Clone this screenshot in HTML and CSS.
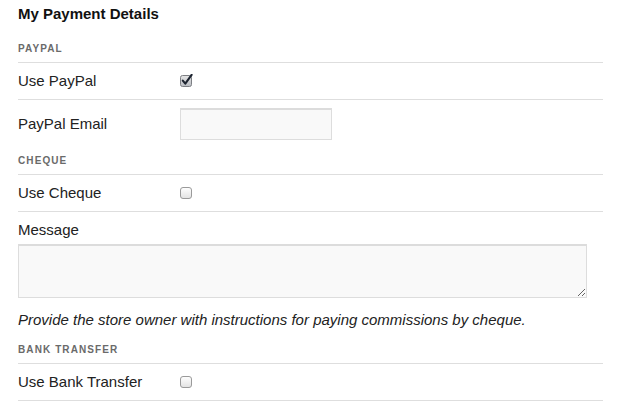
FILE: index.html
```html
<!DOCTYPE html>
<html>
<head>
<meta charset="utf-8">
<link rel="stylesheet" href="styles.css">
</head>
<body>
<div class="page">
  <h2 class="title">My Payment Details</h2>

  <div class="section-head">PayPal</div>
  <div class="row">
    <label class="label">Use PayPal</label>
    <span class="check checked">
      <svg width="13" height="13" viewBox="0 0 13 13">
        <defs>
          <linearGradient id="g1" x1="0" y1="0" x2="0" y2="1">
            <stop offset="0" stop-color="#e6e6e6"/>
            <stop offset="1" stop-color="#b9bcc2"/>
          </linearGradient>
        </defs>
        <rect x="0.5" y="1.5" width="11" height="11" rx="2" fill="url(#g1)" stroke="#7d7f84"/>
        <path d="M2.8 6.6 L5.3 9.6 L11.6 0.8" fill="none" stroke="#1d2430" stroke-width="2.1" stroke-linecap="round" stroke-linejoin="round"/>
      </svg>
    </span>
  </div>
  <div class="row row-field">
    <label class="label">PayPal Email</label>
    <input class="text-input" type="text">
  </div>

  <div class="section-head">Cheque</div>
  <div class="row">
    <label class="label">Use Cheque</label>
    <span class="check">
      <svg width="13" height="13" viewBox="0 0 13 13">
        <defs>
          <linearGradient id="g2" x1="0" y1="0" x2="0" y2="1">
            <stop offset="0" stop-color="#ffffff"/>
            <stop offset="1" stop-color="#e2e2e2"/>
          </linearGradient>
        </defs>
        <rect x="0.5" y="1.5" width="11" height="11" rx="2.5" fill="url(#g2)" stroke="#9a9a9a"/>
      </svg>
    </span>
  </div>
  <div class="block">
    <label class="block-label">Message</label>
    <textarea class="textarea"></textarea>
    <p class="desc">Provide the store owner with instructions for paying commissions by cheque.</p>
  </div>

  <div class="section-head">Bank Transfer</div>
  <div class="row">
    <label class="label">Use Bank Transfer</label>
    <span class="check">
      <svg width="13" height="13" viewBox="0 0 13 13">
        <defs>
          <linearGradient id="g3" x1="0" y1="0" x2="0" y2="1">
            <stop offset="0" stop-color="#ffffff"/>
            <stop offset="1" stop-color="#e2e2e2"/>
          </linearGradient>
        </defs>
        <rect x="0.5" y="1.5" width="11" height="11" rx="2.5" fill="url(#g3)" stroke="#9a9a9a"/>
      </svg>
    </span>
  </div>
</div>
</body>
</html>
```

FILE: styles.css
```css
html, body {
  margin: 0;
  padding: 0;
  background: #ffffff;
}

body {
  font-family: "Liberation Sans", Arial, Helvetica, sans-serif;
  color: #222222;
}

.page {
  width: 585px;
  padding: 0 0 0 18px;
}

.title {
  margin: 0;
  height: 28px;
  line-height: 28px;
  font-size: 15px;
  font-weight: bold;
  color: #111111;
}

.section-head {
  padding: 14px 0 6px;
  line-height: 14px;
  font-size: 10px;
  font-weight: bold;
  letter-spacing: 1.1px;
  text-transform: uppercase;
  color: #6a6a6a;
  border-bottom: 1px solid #dedede;
}

.row {
  display: flex;
  align-items: center;
  height: 36px;
  border-bottom: 1px solid #dedede;
}

.row-field {
  height: auto;
  padding-top: 8px;
  border-bottom: none;
}

.label {
  width: 162px;
  flex: none;
  font-size: 15px;
  line-height: 18px;
  color: #222222;
}

.check {
  display: flex;
  width: 13px;
  height: 13px;
  margin-left: 0;
  margin-top: -1px;
}

.text-input {
  box-sizing: border-box;
  width: 152px;
  height: 32px;
  margin: 0;
  padding: 4px 6px;
  background: #f9f9f9;
  border: 1px solid #dddddd;
  border-top: 2px solid #dcdcdc;
  border-radius: 0;
  font-family: inherit;
  font-size: 14px;
  outline: none;
}

.block {
  display: flex;
  flex-direction: column;
  padding-bottom: 1px;
}

.block-label {
  padding-top: 10px;
  font-size: 15px;
  line-height: 16px;
  color: #222222;
}

.textarea {
  box-sizing: border-box;
  display: block;
  width: 569px;
  height: 54px;
  margin: 6px 0 0;
  padding: 4px 6px;
  background: #f9f9f9;
  border: 1px solid #dddddd;
  border-top: 2px solid #dcdcdc;
  border-radius: 0;
  font-family: inherit;
  font-size: 14px;
  resize: both;
  outline: none;
}

.desc {
  margin: 14px 0 0;
  font-size: 15px;
  line-height: 16px;
  font-style: italic;
  color: #222222;
}
```
